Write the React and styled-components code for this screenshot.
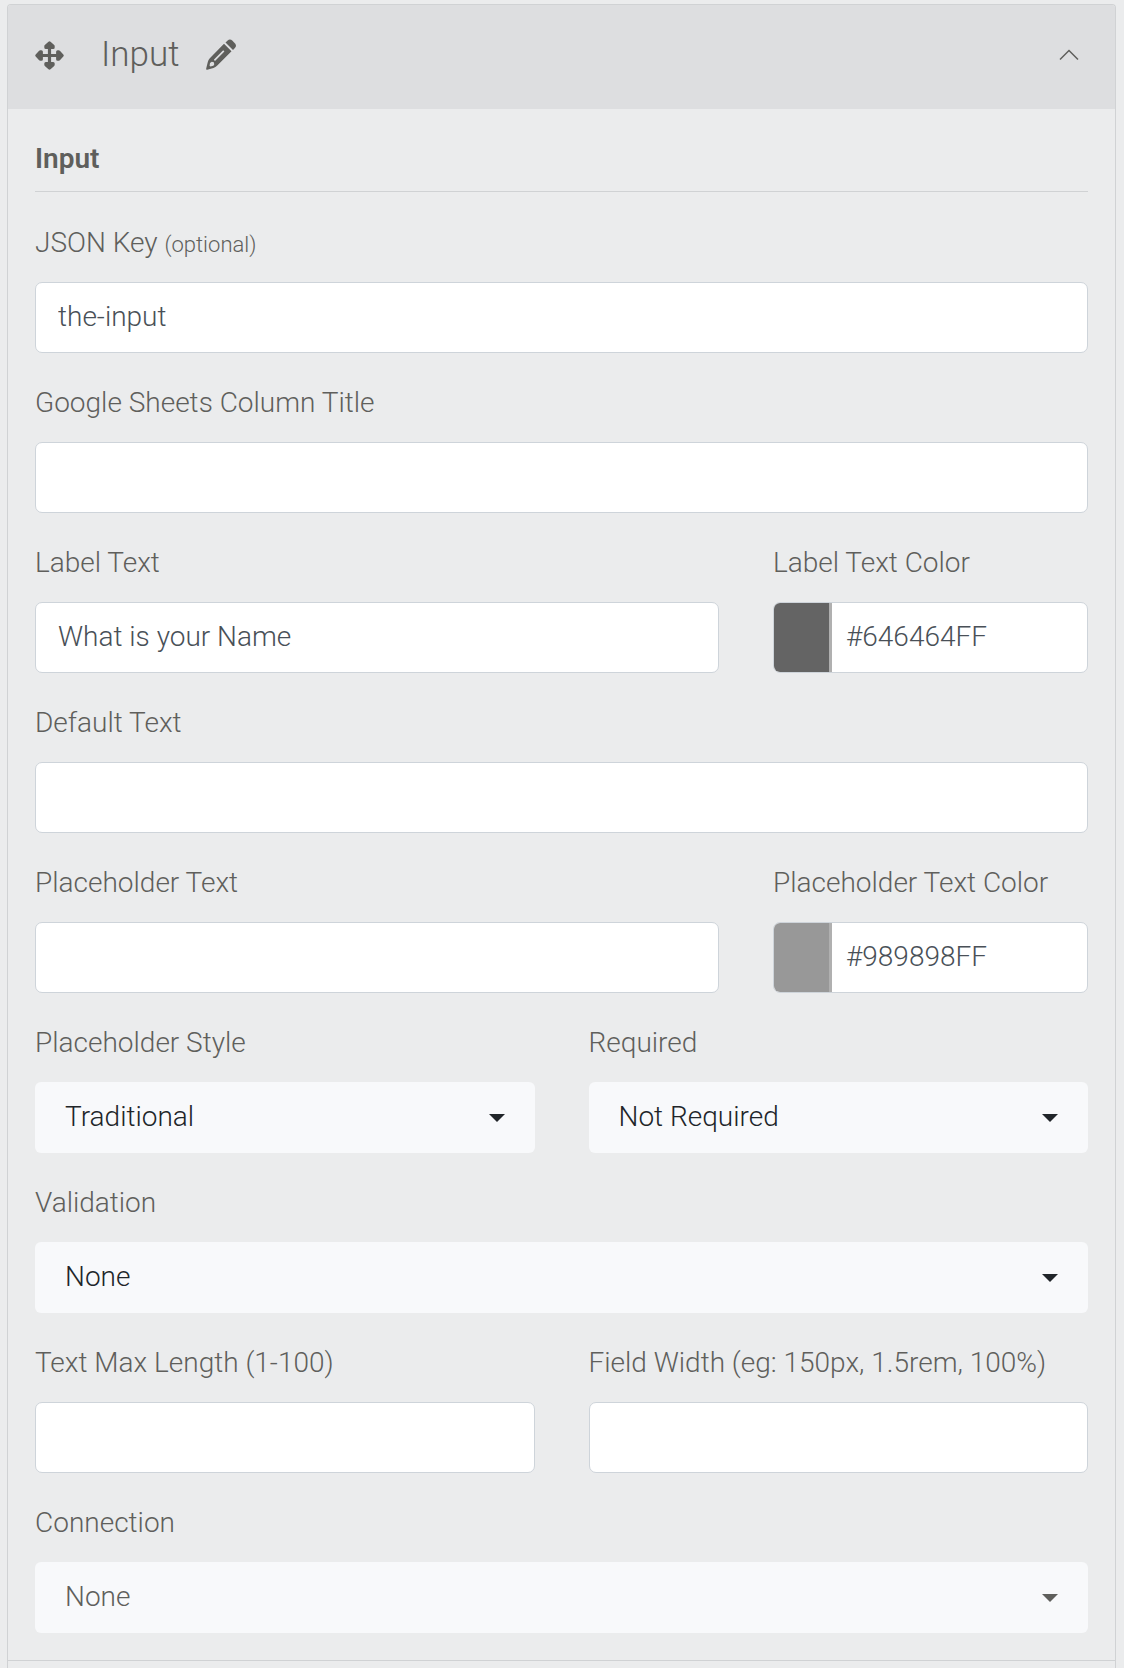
import { useState } from "react";
import styled, { createGlobalStyle } from "styled-components";

const GlobalStyle = createGlobalStyle`
  *,
  *::before,
  *::after {
    box-sizing: border-box;
  }

  body {
    margin: 0;
    background: #ebeced;
    color: #5f5f5c;
    font-family: Roboto, "Liberation Sans", sans-serif;
    font-size: 28px;
    font-weight: 300;
    line-height: 42px;
  }

  button,
  input,
  select {
    font: inherit;
  }
`;

const Page = styled.main`
  display: flex;
  flex-direction: column;
  min-height: 100vh;
  padding: 4px 8px 0 7px;
`;

const Panel = styled.section`
  flex: 1;
  border: 1px solid #d0d2d4;
  border-bottom: 0;
  border-radius: 4px 4px 0 0;
  overflow: hidden;
`;

const Header = styled.header`
  display: flex;
  align-items: center;
  height: 104px;
  padding: 0 27px 4px;
  background: #dddee0;
`;

const IconButton = styled.button`
  display: flex;
  padding: 0;
  border: 0;
  background: none;
  color: inherit;
  cursor: pointer;
`;

const HeaderTitle = styled.h2`
  margin: 0 26px 0 37px;
  font-size: 35px;
  font-weight: 300;
`;

const CollapseButton = styled(IconButton)`
  margin-left: auto;
  padding: 0 9px;
`;

const Body = styled.div`
  padding: 29px 27px 27px;
  border-bottom: 1px solid #d0d2d4;
`;

const SectionTitle = styled.h3`
  margin: 0 0 30px;
  padding-bottom: 11px;
  border-bottom: 1px solid #d0d2d4;
  font-size: 28px;
  font-weight: 600;
`;

const Form = styled.form`
  display: flex;
  flex-direction: column;
  gap: 29px;
`;

const Row = styled.div`
  display: grid;
  grid-template-columns: ${(props) => props.$columns || "1fr"};
  column-gap: 54px;
`;

const Field = styled.div`
  display: flex;
  flex-direction: column;
  gap: 18px;
  min-width: 0;
`;

const Label = styled.label`
  white-space: nowrap;
`;

const Hint = styled.small`
  font-size: 22px;
  line-height: 1;
`;

const TextInput = styled.input`
  width: 100%;
  height: 71px;
  padding: 0 22px 2px;
  border: 1px solid #ced4da;
  border-radius: 7px;
  background: #fff;
  color: #495057;
`;

const ColorGroup = styled.div`
  display: flex;
  height: 71px;
  border: 1px solid #ced4da;
  border-radius: 7px;
  background: #fff;
  overflow: hidden;
`;

const Swatch = styled.button`
  flex: none;
  width: 58px;
  padding: 0;
  border: 0;
  border-right: 3px solid #b0b0b0;
  background: ${(props) => props.$color};
  cursor: pointer;
`;

const ColorInput = styled.input`
  flex: 1;
  min-width: 0;
  padding: 0 14px 2px;
  border: 0;
  background: none;
  color: #495057;
`;

const SelectWrap = styled.div`
  display: grid;
  align-items: center;
  color: ${(props) => (props.$muted ? "#5f5f5c" : "#212529")};

  & > * {
    grid-area: 1 / 1;
  }
`;

const SelectBox = styled.select`
  width: 100%;
  height: 71px;
  padding: 0 60px 2px 30px;
  border: 0;
  border-radius: 6px;
  appearance: none;
  background: #f8f9fb;
  color: inherit;
`;

const Caret = styled.span`
  justify-self: end;
  margin-right: 30px;
  border: 8px solid transparent;
  border-top-color: currentColor;
  border-bottom: 0;
  pointer-events: none;
`;

function MoveIcon() {
  return (
    <svg width="29" height="29" viewBox="0 0 29 29" aria-hidden="true">
      <path
        d="M14.5 4v21M4 14.5h21"
        stroke="currentColor"
        strokeWidth="3.2"
        fill="none"
      />
      <path
        d="M14.5 1.8 18.2 5.2V6.400H10.800V5.200ZM14.500 27.200 18.200 23.800V22.600H10.800V23.800ZM1.800 14.500 5.200 10.800H6.400V18.200H5.200ZM27.200 14.500 23.800 10.800H22.600V18.200H23.800Z"
        fill="currentColor"
        stroke="currentColor"
        strokeWidth="3"
        strokeLinejoin="round"
      />
    </svg>
  );
}

function PencilIcon() {
  return (
    <svg width="32" height="32" viewBox="0 0 32 32" aria-hidden="true">
      <path
        fillRule="evenodd"
        fill="currentColor"
        d="M19 4.8 26.500 12.300 12 26.800Q10.500 28.300 8.500 28.900L2.200 30.800Q.8 31 1.200 29.500L2.800 23Q3.300 21 4.800 19.200ZM6.800 22.800 5 24 4.600 26.800 5.400 27.600 8.400 26.800 9.300 25.200 8.800 23.300ZM8.800 20.700 18.200 11.300 19.400 12.500 10 21.900Z"
      />
      <path
        fill="currentColor"
        d="M20.500 3.400 22.700 1.400Q25-.5 27.500 1.800L29.800 4.200Q32 6.500 30.100 8.700L28 10.900Z"
      />
    </svg>
  );
}

function ChevronIcon() {
  return (
    <svg width="20" height="12" viewBox="0 0 20 12" aria-hidden="true">
      <path
        d="M1 10.5 10 1.5 19 10.5"
        fill="none"
        stroke="currentColor"
        strokeWidth="1.5"
      />
    </svg>
  );
}

function TextField({ id, label, hint, value = "" }) {
  return (
    <Field>
      <Label htmlFor={id}>
        {label} {hint && <Hint>{hint}</Hint>}
      </Label>
      <TextInput id={id} type="text" defaultValue={value} />
    </Field>
  );
}

function ColorField({ id, label, value }) {
  const [color, setColor] = useState(value);

  return (
    <Field>
      <Label htmlFor={id}>{label}</Label>
      <ColorGroup>
        <Swatch type="button" $color={color} aria-label={`Pick ${label}`} />
        <ColorInput
          id={id}
          type="text"
          value={color}
          onChange={(e) => setColor(e.target.value)}
        />
      </ColorGroup>
    </Field>
  );
}

function SelectField({ id, label, options, muted }) {
  return (
    <Field>
      <Label htmlFor={id}>{label}</Label>
      <SelectWrap $muted={muted}>
        <SelectBox id={id}>
          {options.map((option) => (
            <option key={option}>{option}</option>
          ))}
        </SelectBox>
        <Caret />
      </SelectWrap>
    </Field>
  );
}

function App() {
  const [isOpen, setIsOpen] = useState(true);

  return (
    <>
      <GlobalStyle />
      <Page>
        <Panel>
          <Header>
            <IconButton type="button" aria-label="Move">
              <MoveIcon />
            </IconButton>
            <HeaderTitle>Input</HeaderTitle>
            <IconButton type="button" aria-label="Rename">
              <PencilIcon />
            </IconButton>
            <CollapseButton
              type="button"
              aria-label="Toggle panel"
              aria-expanded={isOpen}
              onClick={() => setIsOpen((open) => !open)}
            >
              <ChevronIcon />
            </CollapseButton>
          </Header>

          {isOpen && (
            <Body>
              <SectionTitle>Input</SectionTitle>
              <Form>
                <Row>
                  <TextField
                    id="json-key"
                    label="JSON Key"
                    hint="(optional)"
                    value="the-input"
                  />
                </Row>
                <Row>
                  <TextField id="sheets" label="Google Sheets Column Title" />
                </Row>
                <Row $columns="684fr 315fr">
                  <TextField
                    id="label-text"
                    label="Label Text"
                    value="What is your Name"
                  />
                  <ColorField
                    id="label-color"
                    label="Label Text Color"
                    value="#646464FF"
                  />
                </Row>
                <Row>
                  <TextField id="default-text" label="Default Text" />
                </Row>
                <Row $columns="684fr 315fr">
                  <TextField id="placeholder" label="Placeholder Text" />
                  <ColorField
                    id="placeholder-color"
                    label="Placeholder Text Color"
                    value="#989898FF"
                  />
                </Row>
                <Row $columns="1fr 1fr">
                  <SelectField
                    id="placeholder-style"
                    label="Placeholder Style"
                    options={["Traditional"]}
                  />
                  <SelectField
                    id="required"
                    label="Required"
                    options={["Not Required", "Required"]}
                  />
                </Row>
                <Row>
                  <SelectField
                    id="validation"
                    label="Validation"
                    options={["None"]}
                  />
                </Row>
                <Row $columns="1fr 1fr">
                  <TextField id="max-length" label="Text Max Length (1-100)" />
                  <TextField
                    id="field-width"
                    label="Field Width (eg: 150px, 1.5rem, 100%)"
                  />
                </Row>
                <Row>
                  <SelectField
                    id="connection"
                    label="Connection"
                    options={["None"]}
                    muted
                  />
                </Row>
              </Form>
            </Body>
          )}
        </Panel>
      </Page>
    </>
  );
}

export default App;
